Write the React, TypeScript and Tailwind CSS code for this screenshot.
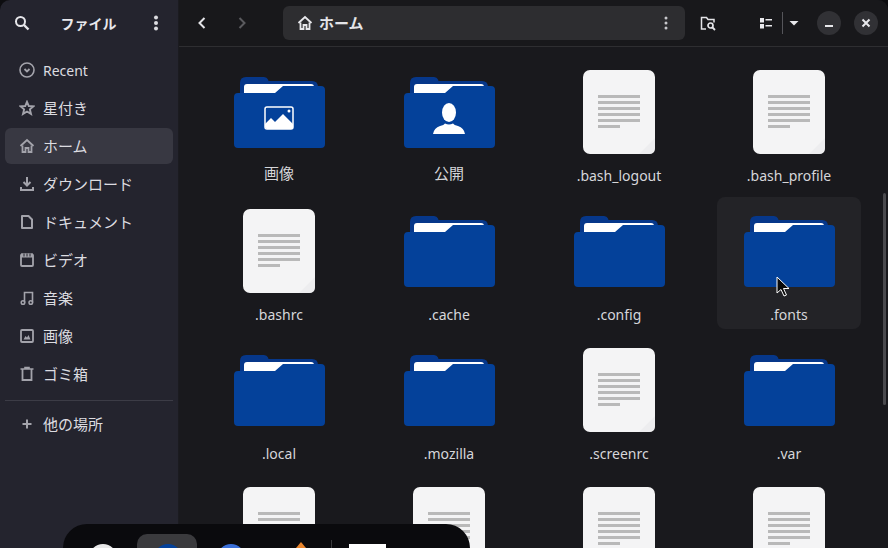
import type { ReactNode } from "react";

const FONT = "font-['Noto_Sans','Noto_Sans_CJK_JP',sans-serif]";

const Icon = ({ children, className = "text-[#a3a3ab]" }: { children: ReactNode; className?: string }) => (
  <svg width="16" height="16" viewBox="0 0 16 16" fill="none" stroke="currentColor" strokeWidth="2" className={className}>
    {children}
  </svg>
);

const HomeGlyph = () => (
  <>
    <path d="M1.5 8 8 2l6.5 6" strokeWidth="1.8" />
    <path d="M3.5 7.5V14h3v-4h3v4h3V7.5" strokeWidth="1.8" />
  </>
);

const sidebarItems = [
  { label: "Recent", latin: true, icon: <><circle cx="8" cy="8" r="7" strokeWidth="1.6" /><path d="m5.5 7 2.5 2.5L10.5 7" strokeWidth="1.8" /></> },
  { label: "星付き", icon: <path d="M8 1.8 9.8 6l4.6.4-3.5 3 1.1 4.5L8 11.5l-4 2.4 1.1-4.5-3.5-3L6.2 6Z" strokeWidth="1.9" /> },
  { label: "ホーム", active: true, icon: <HomeGlyph /> },
  { label: "ダウンロード", icon: <><path d="M8 1v8M4.5 6 8 9.5 11.5 6" /><path d="M2 11v3h12v-3" /></> },
  { label: "ドキュメント", icon: <path d="M3 2h6.5L13 5.5V14H3Z" strokeLinejoin="round" /> },
  { label: "ビデオ", icon: <><rect x="2" y="2.5" width="12" height="11.5" rx="1" strokeWidth="1.8" /><rect x="2" y="1.5" width="12" height="4" fill="currentColor" stroke="none" /><path d="M5 1.5v3M8 1.5v3M11 1.5v3" stroke="#24242e" strokeWidth="1" /></> },
  { label: "音楽", icon: <><circle cx="4" cy="12.5" r="1.8" strokeWidth="1.5" /><circle cx="11.8" cy="12.5" r="1.8" strokeWidth="1.5" /><path d="M5.5 12.5V2.5h8v10" strokeWidth="1.6" /></> },
  { label: "画像", icon: <><rect x="2" y="2" width="12" height="12" rx="1" strokeWidth="1.8" /><path d="M4.5 11.5 6.5 8l1.5 1.5L9.5 7l2 4.5Z" fill="currentColor" stroke="none" /></> },
  { label: "ゴミ箱", icon: <><path d="M1.5 3h13M6 3V1.5h4V3" strokeWidth="1.6" /><path d="M3.5 3v11h9V3" strokeWidth="1.8" /></> },
];

const SidebarRow = ({ label, icon, active, latin }: { label: string; icon: ReactNode; active?: boolean; latin?: boolean }) => (
  <div className={`flex h-9 items-center rounded-md pl-[14px] ${active ? "bg-[#383842]" : ""}`}>
    <Icon>{icon}</Icon>
    <span className={`ml-[8px] text-[#dcdce0] ${latin ? "text-[14px]" : "text-[15px]"}`}>{label}</span>
  </div>
);

const Folder = ({ emblem }: { emblem?: "image" | "person" }) => (
  <svg width="92" height="72" viewBox="-1 0 92 72">
    <path d="M6 24V7q0-6 6-6h18q3 0 4 2.500l.5 1.500h43.500q6 0 6 6v19H6Z" fill="#06378a" />
    <path d="M10 20v-9q0-3 3-3h64q3 0 3 3v9Z" fill="#ffffff" />
    <path d="M0 21q0-4 4-4h37l8-7h38q4 0 4 4v54q0 4-4 4H4q-4 0-4-4Z" fill="#04419a" />
    {emblem === "image" && (
      <g>
        <rect x="31" y="31" width="28" height="22" rx="2" fill="none" stroke="#fff" strokeWidth="1.5" />
        <path d="M31 51v-3l6-6 4 4 8-8 10 10v5H33Z" fill="#fff" />
        <circle cx="55" cy="35" r="1.5" fill="#fff" />
      </g>
    )}
    {emblem === "person" && (
      <g fill="#fff">
        <ellipse cx="45" cy="36.5" rx="7" ry="9.5" />
        <path d="M29 58q1-6 7-8 4-1 5-2.5 4 2 8 0 1 1.5 5 2.5 6 2 7 8Z" />
      </g>
    )}
  </svg>
);

const Doc = () => (
  <div className="relative flex h-[84px] w-[72px] flex-col gap-[3px] rounded-[7px] bg-[#f4f4f5] px-[15px] pt-[25px]">
    {[0, 1, 2, 3, 4].map((i) => (
      <div key={i} className="h-[3px] w-full bg-[#b9b9b9]" />
    ))}
    <div className="h-[3px] w-[22px] bg-[#b9b9b9]" />
    <svg width="16" height="16" viewBox="0 0 16 16" className="absolute bottom-0 right-0">
      <path d="M0 16 16 0v10q0 6-6 6Z" fill="#ededef" />
    </svg>
  </div>
);

type Item = { name: string; kind: "folder" | "doc"; emblem?: "image" | "person"; hover?: boolean };

const items: Item[] = [
  { name: "画像", kind: "folder", emblem: "image" },
  { name: "公開", kind: "folder", emblem: "person" },
  { name: ".bash_logout", kind: "doc" },
  { name: ".bash_profile", kind: "doc" },
  { name: ".bashrc", kind: "doc" },
  { name: ".cache", kind: "folder" },
  { name: ".config", kind: "folder" },
  { name: ".fonts", kind: "folder", hover: true },
  { name: ".local", kind: "folder" },
  { name: ".mozilla", kind: "folder" },
  { name: ".screenrc", kind: "doc" },
  { name: ".var", kind: "folder" },
  { name: "", kind: "doc" },
  { name: "", kind: "doc" },
  { name: "", kind: "doc" },
  { name: "", kind: "doc" },
];

const Tile = ({ item }: { item: Item }) => {
  const cjk = !item.name.startsWith(".");
  return (
    <div className={`flex h-[132px] flex-col items-center rounded-lg pt-[12px] ${item.hover ? "bg-[#232327]" : ""}`}>
      <div className="flex h-[84px] items-center justify-center">
        {item.kind === "folder" ? <Folder emblem={item.emblem} /> : <Doc />}
      </div>
      <div className={`h-5 text-[#d6d6da] ${cjk ? "mt-[9px] text-[15px] leading-5" : "mt-[12px] text-[14px] leading-5"}`}>{item.name}</div>
    </div>
  );
};

export default function App() {
  return (
    <div className={`relative h-[548px] w-[888px] overflow-hidden bg-[#0d0d10] ${FONT}`}>
      <div className="flex h-full overflow-hidden rounded-t-[10px]">
        {/* Sidebar */}
        <aside className="flex h-full w-[179px] shrink-0 flex-col border-r border-[#1b1b20] bg-[#24242e]">
          <div className="flex h-[46px] shrink-0 items-center">
            <div className="flex w-[44px] justify-center">
              <Icon className="text-[#e6e6ea]"><circle cx="6.5" cy="6.5" r="4.5" /><path d="m10 10 4.5 4.5" strokeWidth="2.4" /></Icon>
            </div>
            <div className="flex-1 text-center text-[14px] font-bold text-[#e8e8ec]">ファイル</div>
            <div className="flex w-[45px] justify-center">
              <Icon className="text-[#dcdce0]"><g fill="currentColor" stroke="none"><circle cx="8" cy="2.5" r="2" /><circle cx="8" cy="8" r="2" /><circle cx="8" cy="13.5" r="2" /></g></Icon>
            </div>
          </div>
          <nav className="flex flex-col gap-[2px] px-[5px] pt-[6px]">
            {sidebarItems.map((it) => (
              <SidebarRow key={it.label} {...it} />
            ))}
          </nav>
          <div className="mx-[5px] mt-[8px] h-px bg-[#3c3c46]" />
          <div className="px-[5px] pt-[5px]">
            <SidebarRow label="他の場所" icon={<path d="M8 3.5v9M3.5 8h9" />} />
          </div>
        </aside>

        {/* Main */}
        <main className="flex h-full min-w-0 flex-1 flex-col bg-[#19191d]">
          <header className="flex h-[47px] shrink-0 items-center border-b border-[#2e2e31] bg-[#18181b] pl-[3px]">
            <div className="flex w-10 justify-center">
              <Icon className="text-[#e4e4e8]"><path d="M10.5 3 5.5 8l5 5" /></Icon>
            </div>
            <div className="flex w-10 justify-center">
              <Icon className="text-[#5a5a5e]"><path d="M5.5 3l5 5-5 5" /></Icon>
            </div>
            <div className="ml-[21px] flex h-[34px] w-[402px] items-center rounded-md bg-[#2d2d30] pl-[14px] pr-[11px]">
              <Icon className="text-[#e8e8ec]"><HomeGlyph /></Icon>
              <span className="ml-[6px] flex-1 text-[15px] font-bold text-[#e4e4e8]">ホーム</span>
              <Icon className="text-[#c8c8cc]"><g fill="currentColor" stroke="none"><circle cx="8" cy="3" r="1.5" /><circle cx="8" cy="8" r="1.5" /><circle cx="8" cy="13" r="1.5" /></g></Icon>
            </div>
            <div className="ml-[6px] flex w-[34px] justify-center">
              <Icon className="text-[#e4e4e8]"><path d="M6 14H1.5V2.5h5l1.5 2h6v3" strokeWidth="1.5" /><circle cx="10.5" cy="10.5" r="2.5" strokeWidth="1.7" /><path d="m12.5 12.5 2.5 2.5" strokeWidth="1.8" /></Icon>
            </div>
            <div className="ml-[29px] flex w-[24px] justify-center">
              <Icon className="text-[#e8e8ec]"><g fill="currentColor" stroke="none"><rect x="2" y="3" width="4" height="4.5" /><rect x="2" y="9" width="4" height="4.5" /><rect x="7.5" y="4" width="6.5" height="1.5" /><rect x="7.5" y="10" width="6.5" height="1.5" /></g></Icon>
            </div>
            <div className="ml-[4px] h-[22px] w-px bg-[#55555a]" />
            <div className="flex w-[22px] justify-center">
              <Icon className="text-[#e8e8ec]"><path d="M3.5 6h9L8 10.5Z" fill="currentColor" stroke="none" /></Icon>
            </div>
            <div className="ml-[12px] flex h-6 w-6 items-center justify-center rounded-full bg-[#313135]">
              <div className="mt-[6px] h-[2px] w-[8px] bg-[#e8e8ec]" />
            </div>
            <div className="ml-[13px] flex h-6 w-6 items-center justify-center rounded-full bg-[#313135]">
              <svg width="10" height="10" viewBox="0 0 10 10" stroke="#e8e8ec" strokeWidth="2"><path d="m1.5 1.5 7 7M8.5 1.5l-7 7" /></svg>
            </div>
          </header>
          <div className="grid min-h-0 flex-1 grid-cols-[repeat(4,144px)] content-start gap-x-[26px] gap-y-[7px] overflow-hidden pl-[28px] pt-[11px]">
            {items.map((item, i) => (
              <Tile key={i} item={item} />
            ))}
          </div>
        </main>
      </div>

      {/* Scrollbar */}
      <div className="absolute left-[883px] top-[193px] h-[212px] w-[3px] rounded-full bg-[#4a4a4e]" />

      {/* Cursor */}
      <svg width="14" height="22" viewBox="0 0 14 22" className="absolute left-[776px] top-[276px]">
        <path d="M1 1v16l4-3.5 3 6.5 2.5-1-3-6.5H13Z" fill="#0a0a0a" stroke="#fff" strokeWidth="1" />
      </svg>

      {/* Dock */}
      <div className="absolute left-[63px] top-[524px] h-[60px] w-[407px] rounded-t-[24px] bg-[#0a0a0d]">
        <div className="absolute left-[26px] top-[20px] h-[40px] w-[28px] rounded-full bg-[#e8e8e8]" />
        <div className="absolute left-[74px] top-[10px] h-[40px] w-[60px] rounded-[10px] bg-[#3a3a3d]" />
        <div className="absolute left-[91px] top-[20px] h-[40px] w-[28px] rounded-full bg-[#04419a]" />
        <div className="absolute left-[154px] top-[20px] h-[40px] w-[28px] rounded-full bg-[#3a6fd8]" />
        <svg width="10" height="6" viewBox="0 0 10 6" className="absolute left-[233px] top-[18px]">
          <path d="M5 0 10 6H0Z" fill="#e8842c" />
        </svg>
        <div className="absolute left-[268px] top-[16px] h-[40px] w-px bg-[#3a3a3d]" />
        <div className="absolute left-[286px] top-[20px] h-[40px] w-[37px] bg-white" />
      </div>
    </div>
  );
}
